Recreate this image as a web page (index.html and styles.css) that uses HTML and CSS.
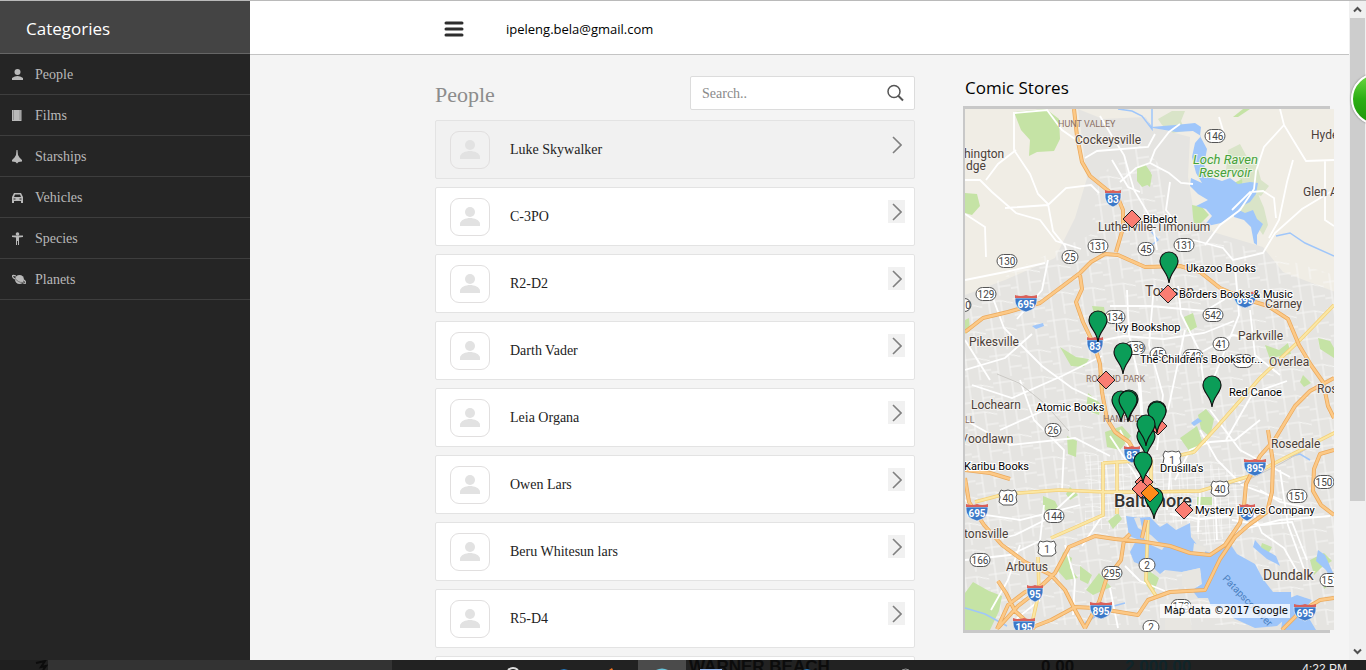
FILE: index.html
```html
<!DOCTYPE html>
<html lang="en">
<head>
<meta charset="utf-8">
<title>People</title>
<link rel="stylesheet" href="styles.css">
</head>
<body>
<svg class="defs" aria-hidden="true">
  <symbol id="person" viewBox="0 0 20 20"><circle cx="10" cy="5" r="5"/><path d="M0 19v-2c0-4 6-6 10-6s10 2 10 6v2z"/></symbol>
  <symbol id="chevron" viewBox="0 0 10 18"><path d="M1 1l8 8-8 8" fill="none" stroke="#808080" stroke-width="1.600"/></symbol>
</svg>
<div class="app">
  <nav class="sidebar">
    <h2 class="sidebar-title">Categories</h2>
    <ul class="menu">
      <li><a class="menu-link" href="#people"><svg class="menu-icon" viewBox="0 0 14 14"><circle cx="5.500" cy="4" r="3"/><path d="M0 12v-2q5.500-4 11 0v2z"/></svg>People</a></li>
      <li><a class="menu-link" href="#films"><svg class="menu-icon" viewBox="0 0 14 14"><path d="M0 1h9.500v11H0z"/><path d="M1.500 1.500v10M8 1.500v10" stroke="#666" stroke-dasharray="1 1"/></svg>Films</a></li>
      <li><a class="menu-link" href="#starships"><svg class="menu-icon" viewBox="0 0 14 14"><path d="M4.500 0h1L6 5l1.500 2.500L10 10v1.500L6.500 12 5 13.500 3.500 12 0 11.500V10l2.500-2.500L4 5z"/></svg>Starships</a></li>
      <li><a class="menu-link" href="#vehicles"><svg class="menu-icon" viewBox="0 0 14 14"><path fill-rule="evenodd" d="M2 2h7l2 4v6H9v-2H2v2H0V6zM3 3.500L2 6h7L8 3.500zM1.500 7.500v1h2v-1zm6 0v1h2v-1z"/></svg>Vehicles</a></li>
      <li><a class="menu-link" href="#species"><svg class="menu-icon" viewBox="0 0 14 14"><circle cx="5.500" cy="2" r="1.800"/><path d="M0 3.500h11V5L7 5.500V13H6V9H5v4H4V5.500L0 5z"/></svg>Species</a></li>
      <li><a class="menu-link" href="#planets"><svg class="menu-icon" viewBox="0 0 14 14"><circle cx="7.500" cy="6.500" r="4.500"/><path d="M4 3C-1 1 0 4 3 6M12 7c4 4 1 4-3 2" fill="none" stroke="#b9b9b9" stroke-width="1.200"/><path d="M3 5.500c3 3 4 4 8 4" fill="none" stroke="#555" stroke-width=".7"/></svg>Planets</a></li>
    </ul>
  </nav>
  <main class="main">
    <header class="topbar">
      <button class="burger" aria-label="Toggle menu"><svg viewBox="0 0 20 16"><path d="M2 2h16M2 8h16M2 14h16" stroke="#2d2d2d" stroke-width="3" stroke-linecap="round"/></svg></button>
      <span class="email">ipeleng.bela@gmail.com</span>
    </header>
    <div class="content">
      <section class="people">
        <div class="people-head">
          <h1 class="people-title">People</h1>
          <form class="search">
            <input class="search-input" type="text" placeholder="Search.." aria-label="Search">
            <button class="search-button" type="button" aria-label="Search"><svg viewBox="0 0 18 18" fill="none" stroke="#555"><circle cx="8" cy="7.500" r="6" stroke-width="1.500"/><path d="M12 11.500l5 5" stroke-width="2"/></svg></button>
          </form>
        </div>
        <ul class="cards">
          <li class="card card-active"><span class="avatar"><svg><use href="#person"/></svg></span><span class="name">Luke Skywalker</span><button class="open" aria-label="Open Luke Skywalker"><svg><use href="#chevron"/></svg></button></li>
          <li class="card"><span class="avatar"><svg><use href="#person"/></svg></span><span class="name">C-3PO</span><button class="open" aria-label="Open C-3PO"><svg><use href="#chevron"/></svg></button></li>
          <li class="card"><span class="avatar"><svg><use href="#person"/></svg></span><span class="name">R2-D2</span><button class="open" aria-label="Open R2-D2"><svg><use href="#chevron"/></svg></button></li>
          <li class="card"><span class="avatar"><svg><use href="#person"/></svg></span><span class="name">Darth Vader</span><button class="open" aria-label="Open Darth Vader"><svg><use href="#chevron"/></svg></button></li>
          <li class="card"><span class="avatar"><svg><use href="#person"/></svg></span><span class="name">Leia Organa</span><button class="open" aria-label="Open Leia Organa"><svg><use href="#chevron"/></svg></button></li>
          <li class="card"><span class="avatar"><svg><use href="#person"/></svg></span><span class="name">Owen Lars</span><button class="open" aria-label="Open Owen Lars"><svg><use href="#chevron"/></svg></button></li>
          <li class="card"><span class="avatar"><svg><use href="#person"/></svg></span><span class="name">Beru Whitesun lars</span><button class="open" aria-label="Open Beru Whitesun lars"><svg><use href="#chevron"/></svg></button></li>
          <li class="card"><span class="avatar"><svg><use href="#person"/></svg></span><span class="name">R5-D4</span><button class="open" aria-label="Open R5-D4"><svg><use href="#chevron"/></svg></button></li>
          <li class="card"></li>
        </ul>
      </section>
      <aside class="stores">
        <h2 class="stores-title">Comic Stores</h2>
        <div class="map-frame">
<svg class="map" viewBox="965 109 369 521" preserveAspectRatio="xMinYMin slice" role="img" aria-label="Map of comic stores in Baltimore">
  <defs>
    <path id="pin" d="M0 21C-1 10-9 7-9-1a9 9 0 0 1 18 0C9 7 1 10 0 21z" fill="#0b9d58" stroke="#111" stroke-width="1.200"/>
    <path id="gem" d="M0-9l9 9-9 9-9-9z" stroke="#222"/>
    <g id="i2"><path d="M-8-5Q-9 6 0 9 9 6 8-5z" fill="#3b78c8" stroke="#fff" stroke-width=".6"/><path d="M-8-8q4 2 8 0 4 2 8 0v3H-8z" fill="#d9605a"/></g>
    <g id="i3"><path d="M-11-5Q-12 6 0 9 12 6 11-5z" fill="#3b78c8" stroke="#fff" stroke-width=".6"/><path d="M-11-8q6 2 11 0 5 2 11 0v3h-22z" fill="#d9605a"/></g>
    <rect id="r3" x="-10" y="-6.500" width="20" height="13" rx="6.500"/>
    <rect id="r2" x="-8" y="-6.500" width="16" height="13" rx="6.500"/>
    <path id="us" d="M-7-8l3 1 4-1 4 1 3-1 2 4-1 3 1 5-4 3H-5l-4-3 1-5-1-3z"/>
    <pattern id="streets" width="31" height="27" patternUnits="userSpaceOnUse" patternTransform="rotate(-8)"><path d="M0 5h19l12 4M7 0v27M19 5v22M19 18h12M0 21h7" fill="none" stroke="#f8f8f7" stroke-width=".9"/></pattern>
    <pattern id="blocks" width="8" height="7" patternUnits="userSpaceOnUse" patternTransform="rotate(-3)"><path d="M0 0h8M0 0v7" stroke="#fff" stroke-width="1.100"/></pattern>
  </defs>
  <path fill="#f0ede5" d="M965 109h369v521H965z"/>
  <path fill="#e5e4e1" d="M1078 109l25 10 42-2 7 10 38 10-2 40 5 30 20 25 50 15 20 25 52 20v338H965V295l40-15 50-22 20-40 12-40-5-40z"/>
  <path fill="url(#streets)" d="M965 300l60-35 65-30 10-60 40-30 20 20 10 60 70 20 94 30v350H965z"/>
  <path fill="url(#blocks)" d="M1085 455h65l60 10 35 10-10 60-30 10-25-22-50-4-10 10h-35z"/>
  <g fill="#c5e3a5">
    <path d="M1014 112l32-3 13 10 1 20-6 12-17 1-8 4 1-16-9-10zM965 193l12 1 3 12-8 9-7-2zM1137 168l8-4 6 9-1 11-8 3-5-6z"/>
    <path fill="#d9e4c8" d="M1158 119l14-8h13l-4 10 4 10-12 2-11-8zM1228 150l12-6 7 13 10 8 4 15 8 6-8 10-13-5-10-15-12-5zM1240 202l18-8 6 14 4 17-5 10-10-15-13-3zM1245 180l13 4-2 12-12 4z"/>
    <path d="M1233 117l10-8h7l-12 8zM1192 205l10 2 7 8-8 8-6 8-2-14zM1145 165l7 10-2 12-5-4zM1230 185l12-6 1 9-10 3z"/>
    <path d="M1265 345l14 5 9-7 3 11-15 3-4 8zM1318 338l12 3 4 7v10l-14-9zM1303 375l8 8-7 4-4-5z"/>
    <path d="M965 320l4-2 1 13-5 3zM1092 306l12 1 2 12-10 2zM1060 347l16 10 13 2-5 8-13-1zM1184 317l9-4 4 14-9 5z"/>
    <path d="M1088 393l13 11-2 11-13-5zM1105 432l17-6 9 10-11 14-13-3zM1180 438l17-12 6 18-11 11zM1198 415l8-6 8 10-4 18-9-8zM1067 436l10 5-1 16-8-3z"/>
    <path d="M965 593l8-11 16 9 13 5-3 15-9 19H965zM1063 552l9 6-2 10 8 10-12 2-8-9zM1086 590l13-17 12 14-18 8zM1043 496l12 5 5 10-12 3-5-7zM1108 521l10-8 4 6-9 10zM1080 566l12 9-4 9-8-4zM1197 497h15v8h-15zM1070 487l8 8-8 5-4-6z"/>
    <path d="M1310 560l14-7 8 8-10 6-8 8zM1322 580l6-7 2 12-6 4zM1145 568l14 10-6 16-9-12zM1262 543l10 4-4 7-8-4z"/>
  </g>
  <g fill="#9fc6fa">
    <path d="M1145 116l6 11 24-2 20-2 6 4-1 9 7 13-3 16 6 12 12 4 8-3 8 6 12-2 8 1-2 11-6 8-8 4-9 9-12 8-18 4 9-11-6-7-10-3 12-6-10-6-8-8 1-8 11 5-6-10-4-16 3-14 6-7-8-5-17 1-23-4-6-8z"/>
    <path d="M1233 207l12 6 8-3 4 9 6 5-6 11v10l-3-2-3-16-7-7-10-3z"/>
    <path d="M1191 423l7-5 4 3-8 5zM1032 326l11-3 1 3-8 3z"/>
    <path d="M1140 518l4 20 4 7-3 15 15 14 5-4 17 2 18-4 2 16-10 6 6 8 10 0 3 8 16 2 6 10 22 10 22-2 14-12V592h-18l-10-13-8-15-18-10-8-12-15 12-13-4-10-13-1-14-14 7-9-7-7 4-10-10-16 1 4 10 13 7 13 12-2 3-20-9-13-5-3-20zM1130 552l8-15 10 8-4 21-10-4z"/>
    <path d="M1255 540l7 8 14 8 4 10-3-2-10-5-14-12zM1318 550l7 5 9 20v9l-8-14-10-9zM1285 600l12-5 15 5-8 10 12 20h-35z"/>
  </g>
  <path fill="#e8e6e1" d="M1182 572l18-4 1 14-8 8-11-4zM1194 543l12 5-2 8-11-4zM1165 600h22l5 30h-27zM1262 568l7 5-6 6z"/>
  <g fill="none" stroke="#9fc6fa" stroke-width="1.500"><path d="M1118 109l14 2 10 5 10 13v-20M965 608l20 6 22 12M1276 236l14-3 15 10 29 13M1150 230l8 10-10 8M1310 460l-10-6-12 3M1085 623l25-16 15-4"/></g>
  <g fill="none" stroke="#fff" stroke-width="1.800">
    <path d="M1014 112v38l16 24 8 20 10 10 5 27 12 15 4 15M965 180h15l12 12 24 21 24 7 16 21 25 8M965 214l20 13 1 30M1016 150l-18 14-12 16M1005 208l43-3 18-17 25-3 8 8M1015 113l32-3 15 20 13 9M1085 158l12-7 51-4 7-13"/>
    <path d="M1100 116l12 20 12 19 10 35 18 30 5 30M1112 160l16 27 12 5M1120 182l16-14 14-5 19 10 12 10 12 1M1150 163l5-13 14-18 11-8M1219 117l6 20"/>
    <path d="M1280 109l4 16 14 23 8 13 28-1M1284 125l-20 22-8 24-2 18-14 21-20 15-15 20M1293 160l-6 22-8 38-10 18M1193 240l30 8 10 12 30-7 12-20 27-24 30-18M1232 210l18-18 13-1 11 7 2 20M1170 182l-4 28 12 15M1325 160v60l9 6"/>
    <path d="M990 290l14 38 18 18 20 20 30 22 25 12M965 280l40-8 40-9M1048 260l-6 30-25 29M965 370l40-12 27-24M972 385l40 13 50-22 40-20M1000 430l45-20 45-5M965 420l45 25 65-7 35 18M1020 380l14 40 30 30-2 40"/>
    <path d="M1104 340l20-4 40 3 40-6 30-12M1110 306h40l55 5 20-12M1127 290l2 45 9 40 5 60M1154 285l-5 60 14 50-6 55M1178 286l3 28 19 38 4 35M1178 365l55-30 20 4M1185 330l-17 80M1235 265l4 50-26 65M1250 310l5 45 25 20M1226 440l27-47 34-12"/>
    <path d="M1175 480l15-30 20-8 25-2 25-20M1200 430l17 30 25 25 40 15M1210 410l30 40 50 27M1260 490l20 12 24 5M1232 520l30 5 30-3 15 38M1250 505l12 28 22 15 18 32M1280 470l8 55 20 55M1240 530l40-10 50-4"/>
    <path d="M965 500l20 15 35 5 60-15M995 540l20-5 30-15 30-28M965 560l45-5 30-14 4-36M1020 545l-12 35-17 30M1065 545l10 35-2 35M1102 516l-20 30M1125 566l15 15 25 10M1040 600l-25 20M1110 588l8 40M965 340l25 40"/>
    <path d="M1110 436l25 38 10 20M1120 430l23 46M1140 378l8 120M1172 450l-5 60M1200 492l-2 40M1215 495l2 45M1170 514l30 5 30-3"/>
  </g>
  <g fill="none" stroke="#cbc9c5"><path d="M997 374l22 9 25 20 25 28M1205 482l35 2 40-20 30-17M1124 460l32 24"/></g>
  <defs>
    <path id="arterials" fill="none" d="M1334 305l-34 35-40 38-44 50-22 24-30 7M975 502l30-8 54-4 46 2h45l50-1 50-15 25-13 65-33M1103 462v53l-52 23M1103 463l48-3v45M1117 462v52M1031 628l8-36-1-35M1148 520l-2 60 10 16"/>
    <path id="motorways" fill="none" stroke-linejoin="round" d="M1074 109l3 27 5 26 8 14 16 13 12 9 5 12v18l-7 24M965 332l18-14 25-6 32-9 20-15 20-15 11-11 14-8 13 1 27 12 35-1 20 6 20 16 25 11 23 7 20 13 11 26 12 20 12 17 5 24 6 12M1080 275l2 14-6 13 7 20 12 25 5 17 2 28 5 27 8 13 14 10 7 12M1334 378l-24 13-15 15-20 33-15 17-14 28-2 22-4 17-15 22-15 10-20-2-20-7-25-4-30-3-20-3-26 11-14 26-14 13-16 6-17 13-11 24M1268 430l5 32-1 30-5 20-17 12-15 13-15 22-15 31-35 2-22 8-10 15-43-7-20-1-24 13-26 10M965 478l4 24 15 23 18 20 23 17 26 13 14 15 10 20 10 18M1130 534l-6 6-3 20-15 20-7 22-14 26M998 581l8 12 9 18 20 18M965 470l25 3 20 6M1334 450l-14 4-6 15-1 22 8 14 13 10M1334 598l-14 2-20 12-18 18M1036 592l-18 14-20 22M1146 520l-4 18"/>
  </defs>
  <use href="#arterials" stroke="#f3cf78" stroke-width="3.500"/>
  <use href="#arterials" stroke="#fbe7a4" stroke-width="2"/>
  <use href="#motorways" stroke="#eba95c" stroke-width="4"/>
  <use href="#motorways" stroke="#fcc987" stroke-width="2.500"/>

  <g class="route">
    <g fill="#fff" stroke="#555">
      <use href="#r3" x="1215" y="136"/><use href="#r3" x="1098" y="246"/><use href="#r3" x="1184" y="245"/><use href="#r3" x="1007" y="261"/><use href="#r3" x="986" y="294"/><use href="#r3" x="961" y="305"/><use href="#r3" x="1213" y="315"/><use href="#r3" x="1115" y="317"/><use href="#r3" x="1135" y="348"/><use href="#r3" x="1193" y="356"/><use href="#r3" x="1243" y="361"/><use href="#r3" x="1054" y="516"/><use href="#r3" x="980" y="560"/><use href="#r3" x="1112" y="573"/><use href="#r3" x="1324" y="482"/><use href="#r3" x="1297" y="496"/><use href="#r3" x="1330" y="580"/><use href="#r3" x="1181" y="606"/>
      <use href="#r2" x="1070" y="257"/><use href="#r2" x="1146" y="249"/><use href="#r2" x="1221" y="344"/><use href="#r2" x="1158" y="354"/><use href="#r2" x="1053" y="430"/><use href="#r2" x="1147" y="565"/><use href="#r2" x="1151" y="627"/>
      <use href="#us" x="1172" y="459"/><use href="#us" x="1008" y="498"/><use href="#us" x="1220" y="489"/><use href="#us" x="1047" y="549"/>
    </g>
    <text x="1215" y="140">146</text><text x="1098" y="250">131</text><text x="1184" y="249">131</text><text x="1007" y="265">130</text><text x="986" y="298">129</text><text x="968" y="309">0</text><text x="1213" y="319">542</text><text x="1115" y="321">134</text><text x="1136" y="352">139</text><text x="1193" y="360">542</text><text x="1054" y="520">144</text><text x="980" y="564">166</text><text x="1112" y="577">295</text><text x="1324" y="486">150</text><text x="1297" y="500">151</text><text x="1330" y="584">151</text><text x="1181" y="610">173</text><text x="1070" y="261">25</text><text x="1146" y="253">45</text><text x="1221" y="348">41</text><text x="1158" y="358">45</text><text x="1053" y="434">26</text><text x="1147" y="569">2</text><text x="1151" y="631">2</text><text x="1172" y="464">1</text><text x="1008" y="502">40</text><text x="1220" y="493">40</text><text x="1047" y="553">1</text>
  </g>
  <use href="#i2" x="1113" y="198"/><use href="#i2" x="1095" y="345"/><use href="#i2" x="1132" y="454"/><use href="#i2" x="1035" y="593"/><use href="#i2" x="1247" y="512"/>
  <use href="#i3" x="1026" y="303"/><use href="#i3" x="1245" y="299"/><use href="#i3" x="977" y="512"/><use href="#i3" x="1255" y="467"/><use href="#i3" x="1101" y="610"/><use href="#i3" x="1024" y="626"/><use href="#i3" x="1305" y="612"/>
  <g class="interstate"><text x="1113" y="203">83</text><text x="1095" y="350">83</text><text x="1132" y="459">83</text><text x="1035" y="598">95</text><text x="1247" y="517">95</text><text x="1026" y="308">695</text><text x="1245" y="304">695</text><text x="977" y="517">695</text><text x="1255" y="472">895</text><text x="1101" y="615">895</text><text x="1024" y="631">195</text><text x="1305" y="617">695</text></g>

  <g class="town">
    <text x="1075" y="144">Cockeysville</text><text x="964" y="158">hington</text><text x="966" y="170">dge</text><text x="1311" y="139">Hyde</text><text x="1303" y="196">Glen Arm</text><text x="1098" y="231">Lutherville-Timonium</text><text x="969" y="346">Pikesville</text><text x="971" y="409">Lochearn</text><text x="963" y="443">/oodlawn</text><text x="964" y="538">tonsville</text><text x="1006" y="571">Arbutus</text><text x="1265" y="308">Carney</text><text x="1238" y="340">Parkville</text><text x="1269" y="366">Overlea</text><text x="1317" y="393">Rossville</text><text x="1271" y="448">Rosedale</text>
  </g>
  <text class="town-large" x="1145" y="296">Towson</text><text class="town-large" x="1263" y="580">Dundalk</text>
  <text class="city" x="1114" y="507">Baltimore</text>
  <g class="district"><text x="1058" y="127">HUNT VALLEY</text><text x="1086" y="382">ROLAND PARK</text><text x="1103" y="422">HAMPDEN</text><text x="965" y="423">LL</text></g>
  <g class="reservoir"><text x="1193" y="164">Loch Raven</text><text x="1199" y="177">Reservoir</text></g>
  <text class="river" x="1222" y="579" transform="rotate(46 1222 579)">Patapsco River</text>

  <g fill="#fa7d72"><use href="#gem" x="1132" y="219"/><use href="#gem" x="1168" y="294"/><use href="#gem" x="1106" y="380"/><use href="#gem" x="1158" y="426"/><use href="#gem" x="1184" y="510"/></g>
  <use href="#pin" x="1169" y="262"/><use href="#pin" x="1098" y="321"/><use href="#pin" x="1123" y="353"/><use href="#pin" x="1212" y="386"/><use href="#pin" x="1121" y="401"/><use href="#pin" x="1129" y="400"/><use href="#pin" x="1128" y="401"/><use href="#pin" x="1157" y="411"/><use href="#pin" x="1157" y="412"/><use href="#pin" x="1146" y="437"/><use href="#pin" x="1146" y="425"/><use href="#pin" x="1154" y="498"/>
  <g fill="#fa7d72"><use href="#gem" x="1144" y="482"/><use href="#gem" x="1141" y="489"/></g><use href="#gem" x="1150" y="493" fill="#ff8c1a"/><use href="#pin" x="1143" y="462"/>
  <g class="store"><text x="1143" y="223">Bibelot</text><text x="1186" y="272">Ukazoo Books</text><text x="1179" y="298">Borders Books &amp; Music</text><text x="1115" y="331">Ivy Bookshop</text><text x="1140" y="363">The Children's Bookstor...</text><text x="1229" y="396">Red Canoe</text><text x="1036" y="411">Atomic Books</text><text x="964" y="470">Karibu Books</text><text x="1160" y="472">Drusilla's</text><text x="1195" y="514">Mystery Loves Company</text></g>
  <path fill="#fff" opacity=".75" d="M1160 604h130v14h-130z"/>
  <text class="credit" x="1164" y="614">Map data ©2017 Google</text>
</svg>
        </div>
      </aside>
    </div>
  </main>
  <div class="scrollbar" aria-hidden="true">
    <svg class="arrow" viewBox="0 0 9 6"><path d="M1 5l3.500-3.500L8 5"/></svg>
    <span class="thumb"></span>
    <span class="track"></span>
    <svg class="arrow" viewBox="0 0 9 6"><path d="M1 1l3.500 3.500L8 1"/></svg>
  </div>
  <span class="bubble"></span>
</div>
<footer class="taskbar">
  <span class="task-start"><svg viewBox="0 0 48 10"><path d="M36 3l9-2-4 6 5-1-3 4" fill="none" stroke="#0c0c0c" stroke-width="2"/></svg></span><span class="task-search"></span>
  <span class="task-icons"><svg viewBox="0 0 246 10"><path d="M116 10q5-4 10 0" stroke="#ddd" stroke-width="2" fill="none"/><path d="M168 10l4-1 4 1z" fill="#277bc0"/><path d="M217 10l3-2 1 2z" fill="#f07422"/></svg></span>
  <span class="task-active"><svg viewBox="0 0 48 10"><path d="M18 10q6-3 12 0z" fill="#69c5dc"/></svg></span>
  <span class="task-desk"><span class="task-label">WARNER BEACH</span>
  <svg viewBox="0 0 240 10"><path d="M14 9h22v1H14z" fill="#8fb2ea"/><path d="M117 10l4-1 4 1z" fill="#277bc0"/><path d="M216 10q4-2 7 0" stroke="#999" fill="none"/></svg></span>
  <span class="task-label">0 00</span>
  <span class="task-label task-label-teal">2 000 00</span>
  <span class="clock">4:22 PM</span>
</footer>
</body>
</html>
```
FILE: styles.css
```css
* { box-sizing: border-box; }
body { margin: 0; height: 100vh; display: flex; flex-direction: column; overflow: hidden; background: #f4f4f4; font-family: "Liberation Serif", serif; font-size: 14px; }
h1, h2, ul { margin: 0; padding: 0; font-weight: normal; list-style: none; }
button { border: 0; padding: 0; background: none; display: flex; }
.defs { position: absolute; width: 0; height: 0; }
.app { flex: 1; min-height: 0; display: flex; position: relative; overflow: hidden; border-top: 1px solid #bababa; }

.sidebar { flex: 0 0 250px; background: #252525; }
.sidebar-title { height: 53px; padding: 0 26px; line-height: 56px; background: #444; border-bottom: 1px solid #666; color: #fff; font-family: "Open Sans", sans-serif; font-size: 17px; }
.menu-link { display: flex; align-items: center; height: 41px; padding: 2px 0 0 12px; gap: 9px; border-bottom: 1px solid #3e3e3e; color: #b9b9b9; text-decoration: none; }
.menu-icon { width: 14px; height: 14px; fill: #b9b9b9; }

.main { flex: 1; min-width: 0; }
.topbar { height: 54px; display: flex; align-items: center; gap: 42px; padding: 2px 0 0 194px; background: #fff; border-bottom: 1px solid #c4c4c4; }
.burger svg { width: 20px; height: 16px; }
.email { font-family: "Open Sans", sans-serif; font-size: 13px; color: #000; }
.content { display: flex; gap: 48px; padding: 21px 15px 0 185px; align-items: flex-start; }
.people { flex: 480 1 0; min-width: 0; }
.people-head { display: flex; justify-content: space-between; }
.people-title { font-size: 22px; line-height: 38px; color: #8c8c8c; }
.search { width: 225px; height: 34px; display: flex; align-items: center; padding: 0 10px 0 11px; background: #fff; border: 1px solid #dcdcdc; border-radius: 2px; }
.search-input { flex: 1; min-width: 0; padding: 2px 0 0; border: 0; outline: 0; background: none; font: inherit; }
.search-input::placeholder { color: #8a8a8a; opacity: 1; }
.search-button svg { width: 18px; height: 18px; }
.cards { display: flex; flex-direction: column; gap: 8px; padding-top: 6px; }
.people-head { height: 36px; }
.cards { padding-top: 8px; }
.card { display: flex; align-items: center; height: 59px; padding: 0 9px 0 14px; background: #fff; border: 1px solid #e3e3e3; border-radius: 2px; }
.card-active { background: #f1f1f1; }
.avatar { width: 40px; height: 38px; display: flex; align-items: center; justify-content: center; border: 1px solid #e1dfdf; border-radius: 9px; }
.avatar svg { width: 20px; height: 20px; fill: #e2e2e2; }
.name { flex: 1; padding-left: 20px; color: #222; font-size: 14px; }
.open { align-self: flex-start; margin-top: 12px; width: 17px; height: 23px; align-items: center; justify-content: center; background: #f1f1f1; }
.open svg { width: 10px; height: 18px; }

.stores { flex: 371 1 0; min-width: 0; }
.stores-title { height: 30px; padding-left: 2px; line-height: 24px; color: #000; font-family: "Open Sans", sans-serif; font-size: 17px; }
.map-frame { border-left: 2px solid #c8c8c8; }
.map-frame::before, .map-frame::after { content: ""; display: block; height: 3px; margin-right: 4px; background: #c8c8c8; }
.map { display: block; width: 100%; aspect-ratio: 369 / 521; }
.map text { font-family: Roboto, sans-serif; }
.map .route text { font-size: 10px; fill: #444; text-anchor: middle; }
.map .interstate text { font-size: 10px; font-weight: bold; fill: #fff; text-anchor: middle; }
.map .town text { font-size: 12px; }
.map .town text, .map .town-large, .map .city { fill: #4b4038; stroke: #f3f1ee; stroke-width: 2px; paint-order: stroke; }
.map .town-large { font-size: 14px; }
.map .city { font-size: 18px; font-weight: 500; fill: #333; }
.map .district text { font-size: 9px; fill: #8a7065; }
.map .reservoir text { font-size: 13px; font-style: italic; fill: #47a03a; stroke: #eef5e5; stroke-width: 2px; paint-order: stroke; }
.map .river { font-size: 10px; fill: #4a7fc0; }
.map .store text { font-size: 11px; fill: #000; stroke: #fff; stroke-width: 2px; paint-order: stroke; }
.map .credit { font-family: "DejaVu Sans", sans-serif; font-size: 10px; }

.scrollbar { flex: 0 0 17px; display: flex; flex-direction: column; align-items: center; background: #f0f0f0; }
.arrow { width: 9px; height: 17px; fill: none; stroke: #505050; stroke-width: 2; }
.thumb { flex: 483; width: 15px; background: #cdcdcd; }
.track { flex: 142; }
.bubble { position: absolute; right: -37px; top: 72px; width: 52px; height: 52px; border: 2px solid #fff; border-radius: 50%; background: linear-gradient(#6ed843, #2cae14 50%, #1f960b); box-shadow: 0 0 2px #666; }

.taskbar { flex: 0 0 10px; display: flex; overflow: hidden; background: #222; }
.task-start { width: 48px; background: #1f1f1f; }
.task-search { width: 344px; background: #333; }
.task-icons { width: 246px; }
.task-active { width: 48px; background: #4b4b4b; }
.taskbar svg { display: block; width: 100%; height: 10px; }
.task-desk { width: 352px; display: grid; justify-items: start; }
.task-desk > * { grid-area: 1 / 1; }
.taskbar .task-desk svg { width: 240px; }
.task-label { padding-left: 3px; color: #0c0c0c; font: bold 17px/14px "Liberation Sans", sans-serif; white-space: nowrap; }
.task-label-teal { margin-left: 48px; color: #10252a; }
.clock { margin-left: auto; padding-right: 19px; color: #eee; font: 12px/18px "Liberation Sans", sans-serif; }
```
